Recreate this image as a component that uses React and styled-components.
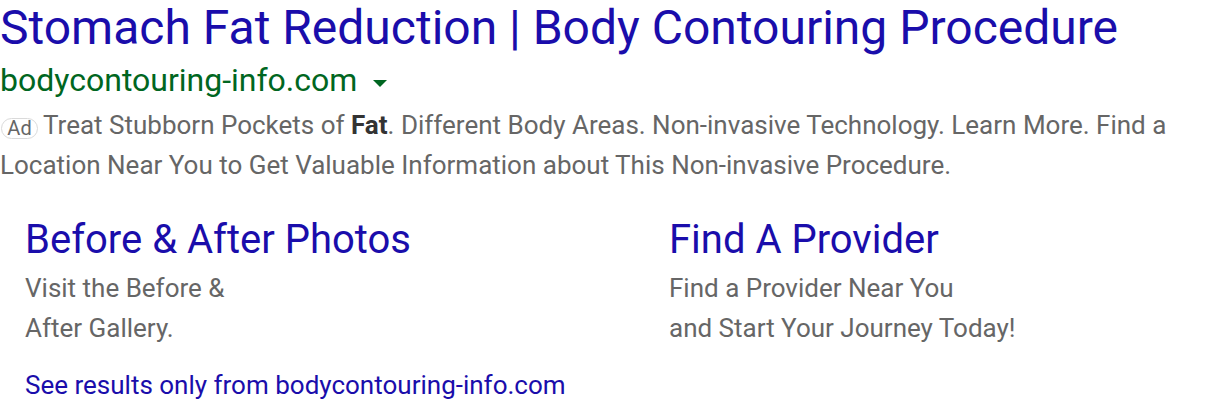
import React from "react";
import styled, { createGlobalStyle } from "styled-components";

const Global = createGlobalStyle`
  html, body { margin: 0; padding: 0; background: #fff; }
  body { font-family: Roboto, "Noto Sans", Arial, sans-serif; }
`;

const Ad = styled.div`
  width: 1216px;
`;

const Title = styled.a`
  display: block;
  color: #1a0dab;
  font-size: 48px;
  line-height: 56px;
  text-decoration: none;
  white-space: nowrap;
`;

const UrlRow = styled.div`
  display: flex;
  align-items: center;
  gap: 16px;
  color: #006621;
  font-size: 32px;
  line-height: 48px;
`;

const Caret = styled.span`
  width: 0;
  height: 0;
  border-left: 7px solid transparent;
  border-right: 7px solid transparent;
  border-top: 7px solid #006621;
  margin-top: 6px;
`;

const Desc = styled.div`
  color: #666;
  font-size: 26px;
  line-height: 40px;
  margin-top: 1px;
  white-space: nowrap;
  b { color: #333; font-weight: 700; }
`;

const Badge = styled.span`
  display: inline-flex;
  align-items: center;
  justify-content: center;
  box-sizing: border-box;
  width: 37px;
  height: 21px;
  border: 1.5px solid #dadada;
  border-radius: 11px;
  font-size: 20px;
  line-height: 20px;
  margin: 0 5px 0 1px;
  color: #666;
  vertical-align: -1px;
`;

const Sitelinks = styled.div`
  display: grid;
  grid-template-columns: 644px 1fr;
  padding-left: 25px;
  margin-top: 31px;
`;

const Sitelink = styled.div`
  display: flex;
  flex-direction: column;
`;

const LinkTitle = styled.a`
  color: #1a0dab;
  font-size: 40px;
  line-height: 48px;
  text-decoration: none;
`;

const LinkDesc = styled.div`
  color: #666;
  font-size: 26px;
  line-height: 40px;
  margin-top: 4px;
`;

const Footer = styled.a`
  display: block;
  color: #1a0dab;
  font-size: 26px;
  line-height: 40px;
  padding-left: 25px;
  margin-top: 17px;
  text-decoration: none;
`;

export default function App() {
  return (
    <Ad>
      <Global />
      <Title>Stomach Fat Reduction | Body Contouring Procedure</Title>
      <UrlRow>
        <span>bodycontouring-info.com</span>
        <Caret />
      </UrlRow>
      <Desc>
        <Badge>Ad</Badge>Treat Stubborn Pockets of <b>Fat</b>. Different Body Areas. Non-invasive Technology. Learn More. Find a
        <br />
        Location Near You to Get Valuable Information about This Non-invasive Procedure.
      </Desc>
      <Sitelinks>
        <Sitelink>
          <LinkTitle>Before &amp; After Photos</LinkTitle>
          <LinkDesc>
            Visit the Before &amp;
            <br />
            After Gallery.
          </LinkDesc>
        </Sitelink>
        <Sitelink>
          <LinkTitle>Find A Provider</LinkTitle>
          <LinkDesc>
            Find a Provider Near You
            <br />
            and Start Your Journey Today!
          </LinkDesc>
        </Sitelink>
      </Sitelinks>
      <Footer>See results only from bodycontouring-info.com</Footer>
    </Ad>
  );
}
